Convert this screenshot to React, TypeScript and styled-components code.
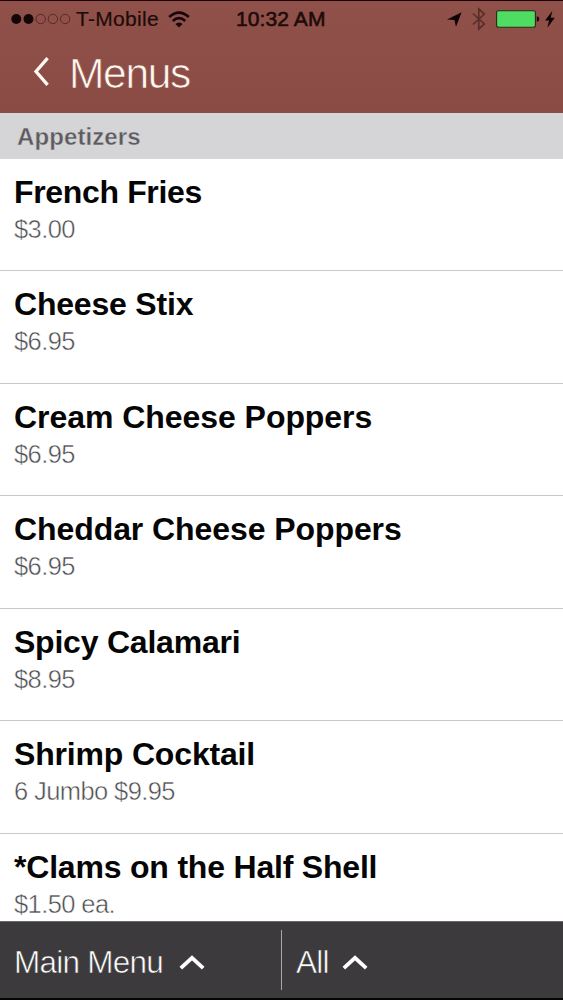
import React from 'react';
import styled, { createGlobalStyle } from 'styled-components';

const GlobalStyle = createGlobalStyle`
  * { box-sizing: border-box; }
  html, body { margin: 0; padding: 0; background: #000; }
  body { font-family: "Liberation Sans", Arial, sans-serif; }
  svg { flex: none; display: block; }
`;

const Screen = styled.div`
  width: 563px;
  height: 1000px;
  display: flex;
  flex-direction: column;
  background: #fff;
  overflow: hidden;
  border-top: 1px solid #1c0205;
  border-bottom: 2px solid #060506;
`;

const Header = styled.header`
  height: 112px;
  flex: none;
  color: #fff8f0;
  background: linear-gradient(#8f5149, #8b4b45);
`;

const StatusBar = styled.div`
  height: 36px;
  display: grid;
  grid-template-columns: 236px 1fr auto;
  align-items: center;
  padding-right: 8px;
  color: #1d0b0a;
`;

const Carrier = styled.div`
  display: flex;
  align-items: center;
  padding-left: 11px;
`;

const CarrierName = styled.span`
  margin: 0 9px 0 5px;
  font-size: 21px;
  line-height: 24px;
  letter-spacing: 0.3px;
  -webkit-text-stroke: 0.2px #1d0b0a;
`;

const Time = styled.span`
  font-size: 21px;
  line-height: 24px;
  letter-spacing: 0.1px;
  -webkit-text-stroke: 0.6px #1d0b0a;
`;

const StatusIcons = styled.div`
  display: flex;
  align-items: center;
`;

const TitleBar = styled.div`
  display: flex;
  align-items: center;
  height: 72px;
  padding-left: 33px;
`;

const Title = styled.h1`
  margin: 2px 0 0 17px;
  font-size: 42.5px;
  line-height: 50px;
  font-weight: 400;
  letter-spacing: -1.3px;
  -webkit-text-stroke: 0.7px #8d4e47;
`;

const SectionHeader = styled.h2`
  flex: none;
  height: 45.5px;
  margin: 0;
  padding-left: 17px;
  background: #d5d4d7;
  color: #5d5b5f;
  font-size: 24px;
  line-height: 48px;
  font-weight: 700;
  letter-spacing: 0.1px;
  -webkit-text-stroke: 0.4px #d5d4d7;
`;

const List = styled.ul`
  flex: 1;
  min-height: 0;
  margin: 0;
  padding: 0;
  list-style: none;
  overflow: hidden;
`;

const Row = styled.li`
  height: 112.5px;
  padding: 14px 14px 0;
  border-bottom: 1px solid #c9c8cb;
`;

const ItemName = styled.div<{ $tracking: number }>`
  color: #050505;
  font-size: 32px;
  line-height: 38px;
  font-weight: 700;
  letter-spacing: ${({ $tracking }) => $tracking}px;
  white-space: nowrap;
`;

const ItemPrice = styled.div`
  color: #4c4c4e;
  font-size: 25.5px;
  line-height: 36px;
  letter-spacing: -0.6px;
  -webkit-text-stroke: 0.5px #fff;
`;

const Footer = styled.footer`
  flex: none;
  display: flex;
  align-items: center;
  height: 77px;
  color: #fff;
  background: #3c3a3c;
  border-top: 1px solid #6b696b;
`;

const FilterButton = styled.button<{ $width?: number; $gap: number }>`
  width: ${({ $width }) => ($width ? `${$width}px` : 'auto')};
  display: flex;
  align-items: center;
  gap: ${({ $gap }) => $gap}px;
  padding: 4px 0 0 14px;
  border: 0;
  background: none;
  color: inherit;
  font: 400 31.5px/38px "Liberation Sans", Arial, sans-serif;
  text-align: left;
`;

const FilterLabel = styled.span`
  letter-spacing: -0.75px;
  -webkit-text-stroke: 0.6px #3c3a3c;
`;

const Divider = styled.span`
  width: 1px;
  height: 60px;
  background: #a9a7a9;
`;

const items = [
  { name: 'French Fries', price: '$3.00', tracking: -0.35 },
  { name: 'Cheese Stix', price: '$6.95', tracking: -0.2 },
  { name: 'Cream Cheese Poppers', price: '$6.95', tracking: -0.05 },
  { name: 'Cheddar Cheese Poppers', price: '$6.95', tracking: -0.08 },
  { name: 'Spicy Calamari', price: '$8.95', tracking: -0.22 },
  { name: 'Shrimp Cocktail', price: '6 Jumbo $9.95', tracking: -0.17 },
  { name: '*Clams on the Half Shell', price: '$1.50 ea.', tracking: -0.2 },
];

const SignalDots = () => (
  <svg width="60" height="12" viewBox="0 0 60 12">
    {[0, 1, 2, 3, 4].map((i) => (
      <circle
        key={i}
        cx={5.3 + i * 12.2}
        cy="6"
        r={i < 2 ? 5 : 4.7}
        fill={i < 2 ? '#160506' : 'none'}
        stroke={i < 2 ? 'none' : '#4c201d'}
        strokeWidth="0.8"
      />
    ))}
  </svg>
);

const WifiIcon = () => (
  <svg width="22" height="17" viewBox="0 0 22 17" fill="none" stroke="#160506" strokeWidth="2.7">
    <path d="M1.2 6Q11-2.8 20.8 6" />
    <path d="M4.8 10Q11 4.4 17.2 10" />
    <path d="M11 16.4L7.4 13Q11 9.8 14.6 13Z" fill="#160506" stroke="none" />
  </svg>
);

const LocationIcon = () => (
  <svg width="15" height="15" viewBox="0 0 15 15">
    <path d="M14.6 0.2L9 14.8L7.4 8L0 7.4Z" fill="#0d0304" />
  </svg>
);

const BluetoothIcon = () => (
  <svg width="14" height="24" viewBox="0 0 14 24" fill="none" stroke="#5b2d2a" strokeWidth="1.7">
    <path d="M1 6.5L12.3 17L6.8 22V2L12.3 7L1 17.5" />
  </svg>
);

const BatteryIcon = () => (
  <svg width="44" height="18" viewBox="0 0 44 18">
    <rect x="0.6" y="0.8" width="38.8" height="16.4" rx="2" fill="#4fdc62" stroke="#2e2817" strokeWidth="1.1" />
    <path d="M40.8 6.2Q43.3 6.4 43.3 9T40.8 11.8Z" fill="#160506" />
  </svg>
);

const BoltIcon = () => (
  <svg width="10" height="17" viewBox="0 0 10 17">
    <path d="M7.3 0L0 9.6H4L2.4 16.8L9.8 6.8H5.7Z" fill="#0d0304" />
  </svg>
);

const BackIcon = () => (
  <svg width="19" height="32" viewBox="0 0 19 32">
    <path d="M14.6 1.2L3 14.5L14.6 27.8" fill="none" stroke="#fff8f0" strokeWidth="3.3" />
  </svg>
);

const ChevronUp = () => (
  <svg width="26" height="16" viewBox="0 0 26 16">
    <path d="M1.8 14.2L13 3.8L24.2 14.2" fill="none" stroke="#fff" strokeWidth="3.8" />
  </svg>
);

const IconSlot = styled.span<{ $gap: number }>`
  display: flex;
  margin-left: ${({ $gap }) => $gap}px;
`;

export default function App() {
  return (
    <>
      <GlobalStyle />
      <Screen>
        <Header>
          <StatusBar>
            <Carrier>
              <SignalDots />
              <CarrierName>T-Mobile</CarrierName>
              <WifiIcon />
            </Carrier>
            <Time>10:32 AM</Time>
            <StatusIcons>
              <LocationIcon />
              <IconSlot $gap={10}><BluetoothIcon /></IconSlot>
              <IconSlot $gap={10}><BatteryIcon /></IconSlot>
              <IconSlot $gap={5}><BoltIcon /></IconSlot>
            </StatusIcons>
          </StatusBar>
          <TitleBar>
            <BackIcon />
            <Title>Menus</Title>
          </TitleBar>
        </Header>
        <SectionHeader>Appetizers</SectionHeader>
        <List>
          {items.map((item) => (
            <Row key={item.name}>
              <ItemName $tracking={item.tracking}>{item.name}</ItemName>
              <ItemPrice>{item.price}</ItemPrice>
            </Row>
          ))}
        </List>
        <Footer>
          <FilterButton $width={281} $gap={16}>
            <FilterLabel>Main Menu</FilterLabel>
            <ChevronUp />
          </FilterButton>
          <Divider />
          <FilterButton $gap={13}>
            <FilterLabel>All</FilterLabel>
            <ChevronUp />
          </FilterButton>
        </Footer>
      </Screen>
    </>
  );
}
